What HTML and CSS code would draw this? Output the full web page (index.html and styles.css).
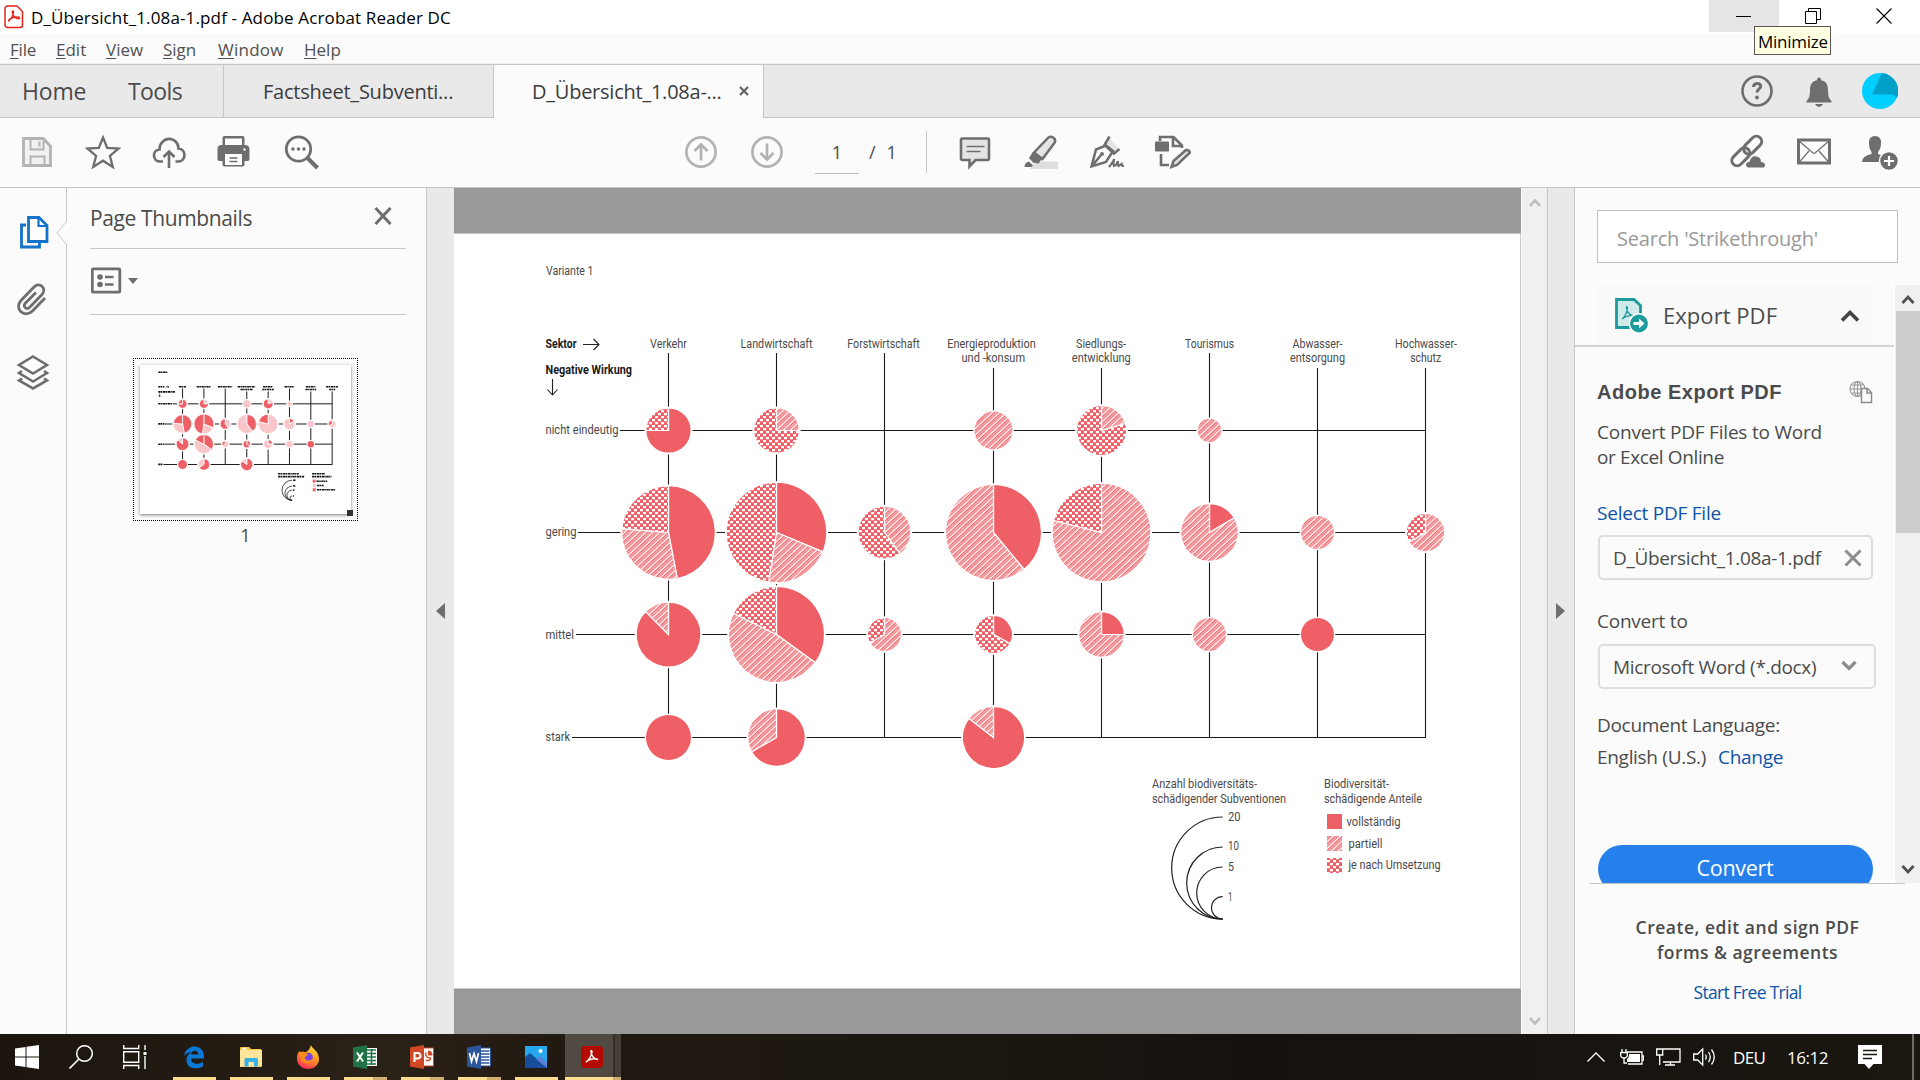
FILE: index.html
```html
<!DOCTYPE html>
<html lang="en">
<head>
<meta charset="utf-8">
<title>D_Übersicht_1.08a-1.pdf - Adobe Acrobat Reader DC</title>
<link rel="stylesheet" href="styles.css">
</head>
<body>
<div class="app">
  <header class="titlebar">
    <svg class="app-icon" width="20" height="24" viewBox="0 0 20 24"><path d="M3.5 1h9.5l5.500 5.500V20a2.500 2.500 0 0 1-2.500 2.500H3.500A2.500 2.500 0 0 1 1 20V3.500A2.500 2.500 0 0 1 3.500 1z" fill="#fff" stroke="#e2231a" stroke-width="1.500"/><path d="M4.500 16c2-1 4.500-5 5-8.500.2-2-1.500-2-1.200 0 .5 3 3.200 6 6 6.200 2 0 1.500-1.700-.5-1.700-3 0-6.500 1-8.300 2.300-1.200 1-1 2-.2 1.700z" fill="none" stroke="#e2231a" stroke-width="1.400"/></svg>
    <span class="title">D_Übersicht_1.08a-1.pdf - Adobe Acrobat Reader DC</span>
    <div class="win-buttons">
      <div class="win-btn win-min"><svg width="16" height="16" viewBox="0 0 16 16"><path d="M1 8.500h15" stroke="#000"/></svg></div>
      <div class="win-btn"><svg width="16" height="16" viewBox="0 0 16 16"><path d="M.5 3.500h11v12H.5zM3.500 3.500V.5h12v11h-4" fill="none" stroke="#000"/></svg></div>
      <div class="win-btn win-close"><svg width="16" height="16" viewBox="0 0 16 16"><path d="M.5.5l15 15M15.500.5l-15 15" stroke="#000" stroke-width="1.100"/></svg></div>
      <div class="tooltip">Minimize</div>
    </div>
  </header>
  <nav class="menubar">
    <span class="m-file"><u>F</u>ile</span><span class="m-edit"><u>E</u>dit</span><span class="m-view"><u>V</u>iew</span><span class="m-sign"><u>S</u>ign</span><span class="m-window"><u>W</u>indow</span><span><u>H</u>elp</span>
  </nav>
  <div class="tabs">
    <div class="home-tabs"><span class="home">Home</span><span class="tools">Tools</span></div>
    <div class="tab">Factsheet_Subventi...</div>
    <div class="tab tab-active">D_Übersicht_1.08a-...<svg width="10" height="10" viewBox="0 0 10 10"><path d="M1 1l8 8M9 1L1 9" stroke="#666" stroke-width="2.300"/></svg></div>
    <div class="tab-actions">
      <svg width="36" height="36" viewBox="0 0 36 36"><circle cx="18" cy="18" r="14.500" fill="none" stroke="#6e6e6e" stroke-width="2.600"/><path d="M14.500 14c0-5 8-4.500 7.200-.2-.4 2.200-3.700 2.300-3.700 5.700" fill="none" stroke="#6e6e6e" stroke-width="3"/><circle cx="18" cy="24.500" r="1.900" fill="#6e6e6e"/></svg>
      <svg width="36" height="36" viewBox="0 0 36 36"><path d="M16 6.500q0-2 2-2t2 2v.8c5.500 1 7 4.700 7 10.200 0 5 1 8.500 3.500 10.500v1.500h-25V28C8 26 9 22.500 9 17.500 9 12 10.500 8.300 16 7.300zM14 31h8q-1.500 3-4 3t-4-3z" fill="#6e6e6e"/></svg>
      <svg width="36" height="36" viewBox="0 0 36 36"><circle cx="18" cy="18" r="18" fill="#00cfff"/><path d="M19.800.1A18 18 0 0 1 35 25l-4-3.500H10z" fill="#00a0c8"/></svg>
    </div>
  </div>
  <div class="toolbar">
    <div class="tool-group group-file">
      <svg viewBox="0 0 36 36"><path d="M4.500 4.500h19.800l7.200 7.700v19.300h-27z" fill="#f1f1f1" stroke="#b3b3b3" stroke-width="2.800"/><path d="M11.500 4v11.500h13V4M11.500 32v-9.500h14V32" fill="none" stroke="#b3b3b3" stroke-width="2"/><path d="M20.500 7.500v5" stroke="#b3b3b3" stroke-width="2"/></svg>
      <svg viewBox="0 0 36 36"><path d="M18 3.500l4.200 10.300 11.500.7-8.800 7.300 2.900 11.200L18 26.700 8.200 33l2.900-11.200-8.800-7.300 11.500-.7z" fill="none" stroke="#6e6e6e" stroke-width="2.300"/></svg>
      <svg viewBox="0 0 36 36"><path d="M12 27.500H9.500C1 27.500 1 16 8.500 15.500 9 1.500 27 1.500 27.500 14.500c8 .5 8 13-.5 13H24.500" fill="none" stroke="#6e6e6e" stroke-width="2.700"/><path d="M18 34V18.500M12.500 23l5.500-5.500 5.500 5.500" fill="none" stroke="#6e6e6e" stroke-width="2.600"/></svg>
      <svg viewBox="0 0 36 36"><path d="M5.500 11V4q0-2 2-2h18q2 0 2 2v7q5 0 5 4v10q0 2-2 2h-3v3.500q0 2-2 2h-18q-2 0-2-2V27h-3q-2 0-2-2V15q0-4 4-4z" fill="#6e6e6e"/><path d="M8 4.500h17V11H8zM8 20h17v11H8z" fill="#fff"/><path d="M12.500 24h8M12.500 27.500h8" stroke="#6e6e6e" stroke-width="1.500"/><circle cx="27.500" cy="15.500" r="1.200" fill="#fff"/></svg>
      <svg viewBox="-1 0 36 36"><circle cx="14.500" cy="15" r="12.200" fill="none" stroke="#6e6e6e" stroke-width="2.800"/><path d="M23.500 24l10 10" stroke="#6e6e6e" stroke-width="4"/><g fill="#6e6e6e"><circle cx="9" cy="15" r="1.700"/><circle cx="14.500" cy="15" r="1.700"/><circle cx="20" cy="15" r="1.700"/></g></svg>
    </div>
    <div class="tool-group group-nav">
      <svg viewBox="0 0 36 36"><g fill="none" stroke="#b3b3b3" stroke-width="2.700"><circle cx="18" cy="18" r="14.600"/><path d="M18 26.500V11M11.500 17L18 10.500l6.500 6.500"/></g></svg>
      <svg viewBox="0 0 36 36"><g fill="none" stroke="#b3b3b3" stroke-width="2.700"><circle cx="18" cy="18" r="14.600"/><path d="M18 9.500V25M11.500 19l6.500 6.500 6.500-6.500"/></g></svg>
    </div>
    <div class="page-input">1</div>
    <div class="page-total"><span>/</span><span>1</span></div>
    <div class="tool-sep"></div>
    <div class="tool-group group-tools">
      <svg viewBox="0 0 36 36"><path d="M5.500 4.500h25q1.500 0 1.500 1.500v18.500q0 1.500-1.500 1.500H18.500l-6 6.500V26h-7Q4 26 4 24.500V6q0-1.500 1.500-1.500z" fill="#e4e4e4" stroke="#6e6e6e" stroke-width="2.600"/><path d="M9.500 12.500h18M9.500 17.500h14" stroke="#6e6e6e" stroke-width="1.500"/></svg>
      <svg viewBox="0 0 36 36"><path d="M12 27.500h23V35H7z" fill="#dedede"/><path d="M11 18.500L25.500 3.500q2.300-1.800 5 .3 2.800 2.200 1 5L19.500 25z" fill="#e4e4e4" stroke="#6e6e6e" stroke-width="2.500"/><path d="M9.500 18.500l9 7-3 4-5.500-1L6 24zM1.500 33q0-4.500 4.500-5.500l4 4-1.500 1.500z" fill="#6e6e6e"/></svg>
      <svg viewBox="0 0 36 36"><path d="M19.500 3l10 11-5 4-9-10z" fill="#e4e4e4"/><path d="M17 11.500L7 15.500 2.500 32.500 17 28l7-11zM20.500 2.500l-5 8.500 9.500 8.500 5.500-4.500M3 32l9-11" fill="none" stroke="#6e6e6e" stroke-width="2.500"/><circle cx="13" cy="20" r="2" fill="#6e6e6e"/><path d="M20 33q5-6 5-8-1 5 0 7 3-1 4-5-.500 3 .5 5l3-2q0 2 2.500 2" fill="none" stroke="#6e6e6e" stroke-width="2.200"/></svg>
      <svg viewBox="0 0 36 36"><path d="M5 7V3h13.500l8.500 8.500V14M18 3v9h9" fill="none" stroke="#6e6e6e" stroke-width="2.600"/><rect x="0" y="7.500" width="14" height="10" rx="1" fill="#6e6e6e"/><path d="M6 20v11h8" fill="none" stroke="#6e6e6e" stroke-width="2.600"/><path d="M16.500 33l2-6L31 16q3-.5 4 2.500L22 31z" fill="#e4e4e4" stroke="#6e6e6e" stroke-width="2.500"/></svg>
    </div>
    <div class="tool-group group-share">
      <svg viewBox="0 0 36 36"><g fill="none" stroke="#6e6e6e" stroke-width="3"><rect x="12" y="6" width="21" height="10.500" rx="5.250" transform="rotate(-45 22.500 11)"/><rect x=".5" y="17.500" width="21" height="10.500" rx="5.250" transform="rotate(-45 11 23)"/></g><path d="M18 34q-3-1-2.500-4 .5-2.500 3.500-2.500 2-7 8-5.500 4.500 1 4.500 5.500 4.500.5 4 4.500-.5 2-2 2z" fill="#6e6e6e" stroke="#fbfbfb" stroke-width="1.200"/></svg>
      <svg viewBox="0 0 36 36"><path d="M2.500 6h31v23h-31z" fill="none" stroke="#6e6e6e" stroke-width="3"/><path d="M3 7l14 12q1 .7 2 0L33 7M3 28.500L13 17M33 28.500L23 17" fill="none" stroke="#6e6e6e" stroke-width="1.200"/></svg>
      <svg viewBox="0 0 36 36"><path d="M13 2q6 0 6 6.500T16 18v2q9 2.500 9 8H0q0-6 9.500-8v-2Q7 15 7 8.500T13 2z" fill="#6e6e6e"/><circle cx="27" cy="27" r="9.500" fill="#6e6e6e" stroke="#fbfbfb" stroke-width="1.500"/><path d="M27 22v10M22 27h10" stroke="#fff" stroke-width="2.200"/></svg>
    </div>
  </div>

  <main class="workspace">
    <aside class="rail">
      <svg class="rail-notch" width="11" height="24" viewBox="0 0 11 24"><path d="M11 0L1 12l10 12" fill="#fbfbfb" stroke="#c8c8c8"/></svg>
      <svg width="36" height="36" viewBox="0 0 36 36"><path d="M10 10H5.500v22h18v-5" fill="none" stroke="#1473c8" stroke-width="2.800"/><path d="M12.500 2.500h10.500l8 8v16H12.500z" fill="#fff" stroke="#1473c8" stroke-width="2.800"/><path d="M22.500 2.500v8.500H31" fill="none" stroke="#1473c8" stroke-width="2.200"/></svg>
      <svg class="rail-clip" width="36" height="36" viewBox="0 0 36 36"><path d="M32 17L19.500 30c-8 8-19-2.500-11.500-10.500L21 6c6-5.500 13 1.500 8 7.500L17 26c-4 3.500-7.500-.5-4.500-4L23 11.500" fill="none" stroke="#6e6e6e" stroke-width="2.800"/></svg>
      <svg class="rail-layers" width="36" height="36" viewBox="0 0 36 36"><path d="M18 2.500l14 8.500-14 8.500L4 11z" fill="none" stroke="#6e6e6e" stroke-width="2.600"/><path d="M7 17l-3 2 14 8.500L32 19l-3-2M7 24.500L4 26.500 18 34.500l14-8-3-2" fill="none" stroke="#6e6e6e" stroke-width="2.600"/></svg>
    </aside>
    <aside class="thumbs">
      <div class="thumbs-head"><span>Page Thumbnails</span><svg width="18" height="18" viewBox="0 0 18 18"><path d="M1.500 1l15 16M16.500 1l-15 16" stroke="#6e6e6e" stroke-width="3"/></svg></div>
      <div class="thumbs-tools"><svg width="48" height="28" viewBox="0 0 48 28"><rect x="1.300" y="1.800" width="27.500" height="23.400" rx="1" fill="none" stroke="#6e6e6e" stroke-width="2.800"/><path d="M14 10h8.500M14 17.500h8.500" stroke="#6e6e6e" stroke-width="2.700"/><circle cx="9" cy="10" r="2.800" fill="#6e6e6e"/><circle cx="9" cy="17.500" r="2.800" fill="#6e6e6e"/><path d="M37 11h10l-5 6z" fill="#6e6e6e"/></svg></div>
      <div class="thumb"><div class="thumb-page"><svg id="thumb" width="211" height="149" viewBox="454 234 1066 754"></svg><i class="thumb-grip"></i></div></div>
      <div class="thumb-num">1</div>
    </aside>
    <div class="gutter gutter-left"><svg width="9" height="18" viewBox="0 0 9 18"><path d="M9 1v16L0 9z" fill="#6e6e6e"/></svg></div>
    <section class="doc">
      <div class="page">
        <svg id="chart" width="1066" height="754" viewBox="454 234 1066 754">
          <defs>
            <pattern id="stripes" width="4.800" height="4.800" patternUnits="userSpaceOnUse" patternTransform="rotate(-43)"><rect width="4.800" height="4.800" fill="#fff"/><path d="M0 .7h4.800M0 2.700h4.800" stroke="#ef6168" stroke-width="1.250"/></pattern>
            <pattern id="checks" width="6" height="6" patternUnits="userSpaceOnUse" x="667" y="530"><rect width="6" height="6" fill="#ef5f66"/><path d="M0 0h3v2.200H0zM3 3h3v2.200H3z" fill="#fff"/></pattern>
          </defs>
        </svg>
      </div>
    </section>
    <div class="doc-scroll"><svg width="12" height="10" viewBox="0 0 12 10"><path d="M1 8l5-5.500L11 8" fill="none" stroke="#bdbdbd" stroke-width="2.600"/></svg><svg width="12" height="10" viewBox="0 0 12 10"><path d="M1 2l5 5.500L11 2" fill="none" stroke="#bdbdbd" stroke-width="2.600"/></svg></div>
    <div class="gutter gutter-right"><svg width="9" height="18" viewBox="0 0 9 18"><path d="M0 1v16l9-8z" fill="#6e6e6e"/></svg></div>
    <aside class="panel">
      <div class="search">Search 'Strikethrough'</div>
      <div class="panel-scroll">
        <div class="panel-body">
          <div class="export-head"><div class="export-inner">
            <svg width="34" height="36" viewBox="0 0 34 36"><path d="M1.500 1.500h17.500l6.500 6v22h-24z" fill="#d0eaea" stroke="#1c9a9c" stroke-width="2.800"/><path d="M7 21c2-1 5-6 5.500-11 0-2-1.500-1.500-1 0 .5 4 3.500 8 8 8-3-1.500-9 0-12.500 3z" fill="none" stroke="#1c9a9c" stroke-width="1.300"/><circle cx="24" cy="25.500" r="9.700" fill="#1c9a9c" stroke="#fff" stroke-width="1.500"/><path d="M18.500 24h5.500v-3.500l5.500 5-5.500 5V27h-5.500z" fill="#fff"/></svg>
            <span>Export PDF</span>
            <svg width="20" height="12" viewBox="0 0 20 12"><path d="M2 10.500l8-8 8 8" fill="none" stroke="#444" stroke-width="3.600"/></svg>
          </div></div>
          <div class="export-body">
            <div class="row-title"><span>Adobe Export PDF</span><svg width="24" height="24" viewBox="0 0 24 24"><g fill="none" stroke="#999" stroke-width="1.100"><circle cx="8.500" cy="9" r="7.500"/><ellipse cx="8.500" cy="9" rx="3.500" ry="7.500"/><path d="M8.500 1.500v15M1 9h15M2.500 5h12M2.500 13h12"/></g><path d="M12.500 8.500h6l4 4v10h-10zM18 8.500v4.500h4.500" fill="#fbfbfb" stroke="#8c8c8c" stroke-width="1.500"/></svg></div>
            <div class="intro">Convert PDF Files to Word<br><span class="intro-2">or Excel Online</span></div>
            <div class="label link">Select PDF File</div>
            <div class="field"><span>D_Übersicht_1.08a-1.pdf</span><svg width="18" height="18" viewBox="0 0 18 18"><path d="M1.500 1.500l15 15M16.500 1.500l-15 15" stroke="#8c8c8c" stroke-width="3"/></svg></div>
            <div class="label label-to">Convert to</div>
            <div class="field field-select"><span>Microsoft Word (*.docx)</span><svg width="16" height="11" viewBox="0 0 16 11"><path d="M1.500 2L8 8.500 14.500 2" fill="none" stroke="#8c8c8c" stroke-width="3.200"/></svg></div>
            <div class="lang">Document Language:<br>English (U.S.)<span class="link change">Change</span></div>
            <div class="convert">Convert</div>
          </div>
        </div>
        <div class="panel-bar"><svg width="14" height="12" viewBox="0 0 14 12"><path d="M1.500 10L7 4l5.500 6" fill="none" stroke="#505050" stroke-width="2.800"/></svg><i></i><svg width="14" height="12" viewBox="0 0 14 12"><path d="M1.500 2L7 8l5.500-6" fill="none" stroke="#505050" stroke-width="2.800"/></svg></div>
      </div>
      <div class="promo"><strong class="promo-1">Create, edit and sign PDF</strong><strong class="promo-2">forms &amp; agreements</strong><span class="link">Start Free Trial</span></div>
    </aside>
  </main>

  <footer class="taskbar">
    <div class="sys sys-start"><svg width="24" height="24" viewBox="0 0 24 24"><path d="M0 3.500l10.500-1.500v9.500H0zM11.500 1.800L24 0v11.500H11.500zM0 12.500h10.500V22L0 20.500zM11.500 12.500H24V24l-12.500-1.800z" fill="#fff"/></svg></div>
    <div class="sys sys-search"><svg width="24" height="24" viewBox="0 0 24 24"><circle cx="15.500" cy="8.500" r="7.800" fill="none" stroke="#fff" stroke-width="1.500"/><path d="M10 14L.5 23.500" stroke="#fff" stroke-width="1.600"/></svg></div>
    <div class="sys sys-view"><svg width="25" height="24" viewBox="0 0 25 24"><path d="M.7 0v3.500h15V0M.7 24v-3.500h15V24M.7 6.700h15v10.500H.7zM22 0v5M22 11v13" fill="none" stroke="#fff" stroke-width="1.400"/><path d="M20.500 7h3v3h-3z" fill="#fff"/></svg></div>
    <div class="task"><svg width="22" height="24" viewBox="0 0 22 24"><path d="M1 11C2.500 4 7 1.500 11.500 1.500c6 0 9.500 4.500 9.500 9.500v2.500H8c.3 6 7 6.500 12 3.500v4.500C10 26 3.500 21.500 3.500 15c0-3.500 2-6.500 5-8C5 7.500 2.500 9 1 11zM8 9.500h7.500C15.500 4.500 8.500 4.500 8 9.500z" fill="#0a78d7"/></svg></div>
    <div class="task"><svg width="24" height="24" viewBox="0 0 24 24"><path d="M1 3q0-1 1-1h8l2 2h10v18H1z" fill="#f7c64b"/><path d="M1 5h22v16.500H1z" fill="#ffe59a"/><path d="M3.500 3h4v1.500h-4z" fill="#fff"/><path d="M5.500 21.500v-7q0-1.500 1.500-1.500h10.500q1.500 0 1.500 1.500v7h-4v-4.500H9.500v4.500z" fill="#35b1e8"/></svg></div>
    <div class="task"><svg width="24" height="24" viewBox="0 0 24 24"><defs><linearGradient id="ff" x1=".8" y1="0" x2=".3" y2="1"><stop offset="0" stop-color="#ffe83c"/><stop offset=".45" stop-color="#ff9a1f"/><stop offset="1" stop-color="#ff2a5c"/></linearGradient></defs><path d="M15 0c1 4 8 6 8 14 0 6-5 10-11 10S1 19.500 1 13.500C1 10 2 7.500 3.500 6l1 2.500C6 7 8 7 9 7.500c2.500-1 5-3 6-7.500z" fill="url(#ff)"/><circle cx="12" cy="12.500" r="4.800" fill="#7542e5"/><path d="M3.500 7c3-1.500 7 0 8.500 3l-3 2c-1 4 5 5 8 1-1 7-11 7-12.500 1z" fill="#ff8a1e"/></svg></div>
    <div class="task task-multi"><svg width="24" height="24" viewBox="0 0 24 24"><path d="M13 3h11v18H13z" fill="#fff"/><path d="M14 5h9M14 8.500h9M14 12h9M14 15.500h9M14 19h9M18.500 4v16" stroke="#217346" stroke-width="1.500"/><path d="M0 2.500L14 0v24L0 21.500z" fill="#217346"/><path d="M4 7.500l6 9M10 7.500l-6 9" stroke="#fff" stroke-width="2"/></svg></div>
    <div class="task task-multi"><svg width="24" height="24" viewBox="0 0 24 24"><path d="M13 3h10.500v18H13z" fill="#fff" stroke="#d24726"/><path d="M18 5.500v5h4.500q0-5-4.500-5z" fill="#d24726"/><path d="M16 7.500q-1.500 5 4.500 5.500 0 3-4.500 2.500" fill="none" stroke="#d24726" stroke-width="1.500"/><path d="M0 2.500L14 0v24L0 21.500z" fill="#d24726"/><path d="M4.500 17V8h3q3 0 3 2.800t-3 2.800h-3" fill="none" stroke="#fff" stroke-width="2"/></svg></div>
    <div class="task task-multi"><svg width="24" height="24" viewBox="0 0 24 24"><path d="M13 3h10.500v18H13z" fill="#fff" stroke="#2b579a"/><path d="M14 6h8.500M14 9h8.500M14 12h8.500M14 15h8.500M14 18h8.500" stroke="#2b579a" stroke-width="1.400"/><path d="M0 2.500L14 0v24L0 21.500z" fill="#2b579a"/><path d="M2.500 8l2 8.500 2.500-8 2.500 8 2-8.500" fill="none" stroke="#fff" stroke-width="1.700"/></svg></div>
    <div class="task"><svg width="22" height="22" viewBox="0 0 22 22"><path d="M0 0h22v22H0z" fill="#25a8ee"/><path d="M0 11l5-4 17 15H0z" fill="#174e9b"/><path d="M11 13l4-3 7 7v5z" fill="#5b7fd6"/><circle cx="15.500" cy="5" r="2" fill="#fff"/></svg></div>
    <div class="task task-active"><svg width="22" height="22" viewBox="0 0 22 22"><rect width="22" height="22" rx="4" fill="#b30b00"/><path d="M5 16c2-1 5.500-5.500 6-10 0-2-1.500-1.500-1 0 .5 4 3.500 7.500 7 7.500-3-1.500-9-.5-12 2.500z" fill="none" stroke="#fff" stroke-width="1.500"/></svg></div>
    <div class="tray">
      <svg class="t-up" width="18" height="10" viewBox="0 0 18 10"><path d="M.5 9.500L9 1l8.500 8.500" fill="none" stroke="#fff" stroke-width="1.300"/></svg>
      <svg class="t-bat" width="24" height="18" viewBox="0 0 24 18"><path d="M7 4h15v12H8M22 8h1.500v4H22M2 1v3M6 1v3M.7 4.500h6.600v3Q7 10 4 10T.7 7.500zM4 10v5h3" fill="none" stroke="#fff" stroke-width="1.300"/><path d="M9 6h11v8H7v-3q2-1 2-5z" fill="#fff"/></svg>
      <svg class="t-mon" width="25" height="18" viewBox="0 0 25 18"><path d="M7 1h17v13H7M14.500 14v3M9 17h10M.7 1h6v6h-6zM3.700 7v10" fill="none" stroke="#fff" stroke-width="1.300"/></svg>
      <svg class="t-vol" width="24" height="20" viewBox="0 0 24 20"><path d="M.7 7h4l5-5v16l-5-5h-4z" fill="none" stroke="#fff" stroke-width="1.300"/><path d="M12.500 7.500q1.500 2.500 0 5M15.500 5q3.500 5 0 10M18.500 2.500q5.500 7.500 0 15" fill="none" stroke="#fff" stroke-width="1.300"/></svg>
      <span class="t-lang">DEU</span><span class="t-clock">16:12</span>
      <svg class="t-note" width="24" height="24" viewBox="0 0 24 24"><path d="M0 0h24v19h-8.500L11 24l-4.500-5H0z" fill="#fff"/><path d="M5 5.500h14M5 9.500h14M5 13.500h9" stroke="#1a1610" stroke-width="1.300"/></svg>
      <i class="t-peek"></i>
    </div>
  </footer>
</div>
<script src="chart.js"></script>
</body>
</html>
```
FILE: styles.css
```css
* { box-sizing: border-box; }
body { margin: 0; background: #fbfbfb; color: #4b4b4b; font-family: "Open Sans", "Noto Sans", sans-serif; overflow: hidden; }
svg { display: block; flex: none; }
i { display: block; }
span, div { white-space: nowrap; }
.app { width: 1920px; height: 1080px; display: flex; flex-direction: column; }
.link { color: #0d53a8; }

.titlebar { height: 34px; flex: none; background: #fff; display: flex; align-items: center; padding-left: 4px; color: #000; }
.title { font-size: 17px; letter-spacing: .14px; margin-left: 7px; }
.win-buttons { margin-left: auto; display: flex; position: relative; align-self: flex-start; width: 211px; }
.win-btn { width: 70px; height: 32px; display: flex; align-items: center; justify-content: center; padding-right: 2px; }
.win-min { background: #e5e5e5; }
.win-close { width: 71px; }
.tooltip { position: absolute; left: 45px; top: 26px; width: 77px; height: 29px; border: 1px solid #575757; background: #ffffe1; font-size: 17px; line-height: 29px; padding-left: 3px; letter-spacing: -.25px; z-index: 2; }

.menubar { height: 30px; flex: none; display: flex; align-items: center; padding: 1px 0 0 10px; font-size: 17px; border-bottom: 1px solid #f0f0f0; color: #505050; }
.menubar u { text-underline-offset: 2px; text-decoration-thickness: 1px; }
.m-file { width: 46px; letter-spacing: -.2px; }
.m-edit { width: 50px; }
.m-view { width: 57px; }
.m-sign { width: 55px; }
.m-window { width: 86px; letter-spacing: .25px; }

.tabs { height: 54px; flex: none; display: flex; background: #e9e9e9; border-top: 1px solid #c6c6c6; border-bottom: 1px solid #c6c6c6; }
.home-tabs { width: 224px; display: flex; align-items: center; padding-left: 22px; font-size: 23px; border-right: 1px solid #c6c6c6; }
.home { width: 106px; letter-spacing: -.2px; }
.tools { letter-spacing: -.6px; }
.tab { width: 270px; display: flex; align-items: center; padding: 1px 0 0 39px; font-size: 20px; letter-spacing: -.24px; border-right: 1px solid #c6c6c6; color: #3c3c3c; }
.tab-active { background: #fbfbfb; margin-bottom: -1px; padding: 0 0 1px 38px; }
.tab svg { margin-left: 17px; }
.tab-actions { margin-left: auto; display: flex; align-items: center; gap: 25.5px; padding-right: 22px; padding-bottom: 1px; }

.toolbar { height: 70px; flex: none; display: flex; align-items: center; border-bottom: 1px solid #c6c6c6; padding-bottom: 1px; }
.tool-group { display: flex; }
.tool-group svg { width: 36px; height: 36px; margin: 0 15px; }
.group-file { margin-left: 4px; }
.group-nav { margin-left: 334px; }
.page-input { margin-left: 15px; margin-top: 1px; width: 44px; height: 42px; border-bottom: 1px solid #bdbdbd; text-align: center; font-size: 18px; line-height: 41px; }
.page-total { display: flex; font-size: 18px; width: 67px; padding-left: 10px; gap: 11px; }
.tool-sep { width: 1px; height: 42px; background: #c6c6c6; }
.group-tools { margin-left: 15px; }
.group-share { margin-left: auto; margin-right: 7px; }

.workspace { height: 846px; flex: none; display: flex; }
.rail { width: 67px; border-right: 1px solid #c6c6c6; position: relative; padding: 27px 0 0 16px; display: flex; flex-direction: column; }
.rail-clip { margin: 30px 0 0 -3px; }
.rail-layers { margin: 37px 0 0 -1px; }
.rail-notch { position: absolute; right: -1px; top: 33px; }
.thumbs { width: 360px; border-right: 1px solid #c6c6c6; padding: 0 20px 0 23px; display: flex; flex-direction: column; }
.thumbs-head { height: 61px; border-bottom: 1px solid #c6c6c6; display: flex; justify-content: space-between; font-size: 21px; line-height: 60px; letter-spacing: -.38px; padding-right: 14px; }
.thumbs-head svg { margin-top: 19px; }
.thumbs-tools { height: 66px; border-bottom: 1px solid #c6c6c6; padding: 18px 0 0 1px; }
.thumb { width: 225px; height: 163px; margin: 43px 0 0 43px; border: 1px dotted #000; padding: 6px; }
.thumb-page { width: 211px; height: 149px; background: #fff; box-shadow: 0 1px 3px rgba(0,0,0,.5); position: relative; }
.thumb-grip { position: absolute; right: -2px; bottom: -2px; width: 6px; height: 6px; background: #333; }
.thumb-num { text-align: center; font-size: 18px; line-height: 28px; padding-right: 5px; }

.gutter { background: #e9e9e9; display: flex; align-items: center; justify-content: center; padding-bottom: 1px; }
.gutter-left { width: 27px; padding-right: 1px; }
.gutter-right { width: 28px; border-left: 1px solid #c6c6c6; border-right: 1px solid #c6c6c6; margin-left: auto; padding-right: 2px; }
.doc { width: 1067px; background: #999; padding-top: 45px; }
.page { height: 756px; width: 1067px; background: #fff; border: 1px solid #c6c6c6; border-left: 0; }
.chart-text { font-family: Roboto, "Open Sans", sans-serif; font-size: 12.500px; fill: #4a4a4a; }
.chart-bold { font-weight: 700; fill: #1a1a1a; }
.doc-scroll { width: 26px; background: #f0f0f0; border-left: 1px solid #fff; display: flex; flex-direction: column; justify-content: space-between; align-items: center; padding: 10px 0 8px; }

.panel { width: 345px; display: flex; flex-direction: column; padding-top: 22px; }
.search { width: 301px; height: 53px; margin-left: 22px; border: 1px solid #c0c0c0; background: #fff; font-size: 20px; line-height: 55px; padding-left: 19px; color: #999; letter-spacing: -.2px; flex: none; }
.panel-scroll { display: flex; margin-top: 22px; height: 598px; flex: none; }
.panel-body { width: 319px; height: 598px; overflow: hidden; }
.export-head { height: 62px; border-bottom: 2px solid #d2d2d2; padding-left: 22px; }
.export-inner { width: 275px; height: 60px; background: #f9f9f9; display: flex; align-items: center; padding: 0 12px 1px 18px; font-size: 22px; letter-spacing: .05px; }
.export-inner svg { position: relative; top: 1px; }
.export-inner span { margin-left: 14px; margin-right: auto; }
.export-body { padding: 33px 0 0 22px; font-size: 19px; letter-spacing: -.3px; }
.row-title { height: 24px; width: 276px; display: flex; justify-content: space-between; align-items: center; font: 700 20px "Liberation Sans", Arial, sans-serif; letter-spacing: .52px; }
.intro { margin-top: 16px; line-height: 25px; letter-spacing: -.21px; }
.intro-2 { letter-spacing: -.37px; }
.label { margin-top: 30px; line-height: 26px; letter-spacing: -.23px; }
.label-to { margin-top: 28px; }
.field { width: 275px; height: 45px; margin: 9px 0 0 1px; border: 2px solid #dedede; border-radius: 5px; display: flex; align-items: center; justify-content: space-between; padding: 1px 9px 0 13px; letter-spacing: -.33px; }
.field-select { width: 278px; margin-top: 10px; padding-right: 17px; }
.field-select svg { margin-bottom: 3px; }
.lang { margin-top: 20px; line-height: 32px; }
.change { margin-left: 12px; }
.convert { width: 275px; height: 48px; margin: 72px 0 0 1px; border-radius: 24px; background: #2680eb; color: #fff; font-size: 21.500px; line-height: 46px; text-align: center; padding-right: 1px; }
.panel-bar { width: 26px; background: #f0f0f0; border-left: 1px solid #fff; display: flex; flex-direction: column; align-items: center; padding: 8px 0 7px; }
.panel-bar i { width: 24px; height: 222px; margin-top: 6px; margin-bottom: auto; background: #cdcdcd; }
.promo { border-top: 1px solid #c6c6c6; margin: 0 15px; padding-top: 31px; display: flex; flex-direction: column; align-items: center; font-size: 17.500px; line-height: 25px; }
.promo strong { font-weight: 600; }
.promo-1 { letter-spacing: .52px; }
.promo-2 { letter-spacing: .46px; margin-bottom: 15px; }
.promo .link { letter-spacing: -.7px; }

.taskbar { height: 46px; flex: none; display: flex; background: linear-gradient(90deg, #1b150e, #2a2117 20%, #1f1810 32%, #1b1710 50%, #15120e 65%, #1a1610); color: #fff; }
.sys { display: flex; align-items: center; justify-content: center; }
.sys-start { width: 54px; }
.sys-search { width: 54px; }
.sys-view { width: 58px; padding-right: 4px; }
.task { width: 57px; display: flex; align-items: center; justify-content: center; padding-right: 2px; background: linear-gradient(#ffdb8e, #ffdb8e) 7px 100% / 43px 3px no-repeat; }
.task-multi { background: linear-gradient(90deg, #ffdb8e 29px, #cfae70 29px) 7px 100% / 43px 3px no-repeat; }
.task-active { padding-right: 2px; background: linear-gradient(90deg, #ffdb8e 48px, #cfae70 48px) 0 100% / 56px 3px no-repeat, linear-gradient(90deg, #504a43 48px, #332d26 48px, #332d26 50px, #443e37 50px); width: 56px; }
.tray { margin-left: auto; width: 333px; display: flex; align-items: center; font-size: 17px; }
.t-bat { margin-left: 15px; }
.t-mon { margin-left: 12px; }
.t-vol { margin-left: 12px; }
.t-lang { margin-left: 16px; width: 54px; letter-spacing: -.7px; }
.t-clock { width: 71px; letter-spacing: -.45px; }
.t-peek { margin-left: 30px; width: 2px; height: 46px; background: #6e6a65; }
```
FILE: chart.js
```js
(function () {
  var NS = 'http://www.w3.org/2000/svg';
  var RED = '#ef5f66';
  var FILL = { v: RED, p: 'url(#stripes)', j: 'url(#checks)' };
  var cols = [668.5, 776.5, 884.5, 993.5, 1101.5, 1209.5, 1317.5, 1425.5];
  var rows = [430.5, 532.5, 634.5, 737.5];
  var colTop = [353, 353, 353, 368, 368, 353, 368, 368];
  var rowLeft = [620, 578, 576, 572];

  // column, row, radius, then pairs of share type and end of the share
  var pies = [
    [0, 0, 22.7, 'v', .75, 'j', 1], [1, 0, 22.8, 'p', .25, 'j', 1], [3, 0, 19, 'p', 1], [4, 0, 25, 'p', .205, 'j', 1], [5, 0, 11.7, 'p', 1],
    [0, 1, 46.8, 'v', .47, 'p', .763, 'j', 1], [1, 1, 50.3, 'v', .313, 'p', .525, 'j', 1], [2, 1, 26.4, 'p', .4, 'j', 1],
    [3, 1, 48, 'v', .39, 'p', 1], [4, 1, 49.3, 'p', .789, 'j', 1], [5, 1, 28.8, 'v', .165, 'p', 1], [6, 1, 16.5, 'p', 1], [7, 1, 19.2, 'p', .667, 'j', 1],
    [0, 2, 32.4, 'v', .875, 'p', 1], [1, 2, 48, 'v', .35, 'p', .823, 'j', 1], [2, 2, 17, 'p', .667, 'j', 1], [3, 2, 19, 'v', .33, 'j', 1],
    [4, 2, 22.8, 'v', .25, 'p', 1], [5, 2, 16.5, 'p', 1], [6, 2, 16.5, 'v', 1],
    [0, 3, 22.5, 'v', 1], [1, 3, 28.8, 'v', .667, 'p', 1], [3, 3, 31.1, 'v', .855, 'p', 1]
  ];

  // text, x, baseline, width, anchor, bold
  var texts = [
    ['Variante 1', 546, 275, 47.5], ['Sektor', 545.5, 348, 31, 's', 1], ['Negative Wirkung', 545.5, 374, 86.5, 's', 1],
    ['Verkehr', 668.5, 348, 37, 'm'], ['Landwirtschaft', 776.5, 348, 72, 'm'], ['Forstwirtschaft', 883.5, 348, 72.5, 'm'],
    ['Energieproduktion', 991.5, 348, 88.5, 'm'], ['und -konsum', 993.3, 362, 63.5, 'm'],
    ['Siedlungs-', 1101, 348, 50, 'm'], ['entwicklung', 1101.3, 362, 59, 'm'], ['Tourismus', 1209.5, 348, 49, 'm'],
    ['Abwasser-', 1317.5, 348, 50, 'm'], ['entsorgung', 1317.5, 362, 55, 'm'], ['Hochwasser-', 1426, 348, 62, 'm'], ['schutz', 1425.7, 362, 31, 'm'],
    ['nicht eindeutig', 545.5, 434, 73], ['gering', 545.5, 536, 31], ['mittel', 545.5, 639, 28.5], ['stark', 545.5, 741, 24.5],
    ['Anzahl biodiversitäts-', 1152, 788, 105], ['schädigender Subventionen', 1152, 803, 134],
    ['20', 1228, 821, 12.5], ['10', 1228, 850, 11], ['5', 1228, 871, 6], ['1', 1228, 901, 4.5],
    ['Biodiversität-', 1324, 788, 65], ['schädigende Anteile', 1324, 803, 98],
    ['vollständig', 1346.5, 826, 54], ['partiell', 1348.5, 848, 34], ['je nach Umsetzung', 1348.5, 869, 92]
  ];

  function add(svg, name, attrs) {
    var el = document.createElementNS(NS, name);
    for (var k in attrs) el.setAttribute(k, attrs[k]);
    svg.appendChild(el);
    return el;
  }

  function draw(svg, small) {
    var lw = small ? 5 : 1.1;
    cols.forEach(function (x, i) { add(svg, 'path', { d: 'M' + x + ' ' + colTop[i] + 'V737.5', stroke: '#1a1a1a', 'stroke-width': lw }); });
    rows.forEach(function (y, i) { add(svg, 'path', { d: 'M' + rowLeft[i] + ' ' + y + 'H1426', stroke: '#1a1a1a', 'stroke-width': lw }); });
    pies.forEach(function (p) {
      var cx = cols[p[0]], cy = rows[p[1]], r = p[2], from = 0;
      add(svg, 'circle', { cx: cx, cy: cy, r: r + (small ? 5 : 1.3), fill: '#fff' });
      for (var i = 3; i < p.length; i += 2) {
        var to = p[i + 1];
        if (to - from === 1) {
          add(svg, 'circle', { cx: cx, cy: cy, r: r, fill: FILL[p[i]] });
        } else {
          var a = from * 2 * Math.PI, b = to * 2 * Math.PI;
          add(svg, 'path', {
            d: 'M' + cx + ' ' + cy + 'L' + (cx + r * Math.sin(a)) + ' ' + (cy - r * Math.cos(a)) +
              'A' + r + ' ' + r + ' 0 ' + (to - from > .5 ? 1 : 0) + ' 1 ' + (cx + r * Math.sin(b)) + ' ' + (cy - r * Math.cos(b)) + 'Z',
            fill: small && p[i] === 'j' ? RED : FILL[p[i]], stroke: '#fff', 'stroke-width': small ? 4 : 1.2
          });
        }
        from = to;
      }
    });
    [51, 36, 26, 11.2].forEach(function (r) {
      add(svg, 'path', { d: 'M1222.700 919A' + r + ' ' + r + ' 0 0 1 1222.700 ' + (919 - 2 * r), fill: 'none', stroke: '#222', 'stroke-width': small ? 4 : 1.2 });
    });
    ['v', 'p', 'j'].forEach(function (k, i) { add(svg, 'rect', { x: 1327, y: 814 + 22 * i, width: 15, height: 15, fill: small && k === 'j' ? RED : FILL[k] }); });
    add(svg, 'path', { d: 'M583 344.500H598.500M593.500 339L599 344.500L593.500 350M552.500 379V394.500M547.500 389.500L552.500 395L557.500 389.500', fill: 'none', stroke: '#222', 'stroke-width': small ? 4 : 1.1 });
    texts.forEach(function (t) {
      if (small) {
        var x = t[4] === 'm' ? t[1] - t[3] / 2 : t[1];
        add(svg, 'path', { d: 'M' + x + ' ' + (t[2] - 4) + 'h' + t[3], stroke: '#111', 'stroke-width': 8, 'stroke-dasharray': '12 2 7 3' });
        return;
      }
      var el = add(svg, 'text', { x: t[1], y: t[2], 'class': 'chart-text' + (t[5] ? ' chart-bold' : ''), 'text-anchor': t[4] === 'm' ? 'middle' : 'start', textLength: t[3], lengthAdjust: 'spacingAndGlyphs' });
      el.textContent = t[0];
    });
  }

  draw(document.getElementById('chart'), false);
  draw(document.getElementById('thumb'), true);
})();
```
